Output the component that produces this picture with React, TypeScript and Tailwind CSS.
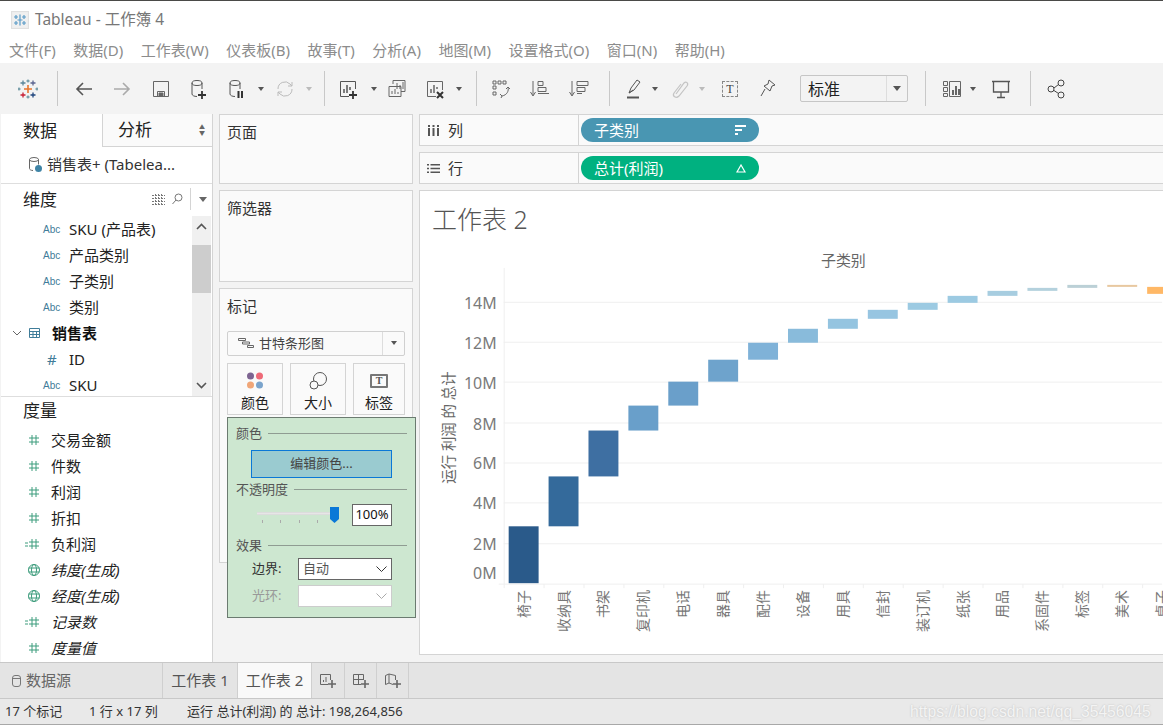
import React from 'react';

const Ic: React.FC<{ w?: number; h?: number; children: React.ReactNode; c?: string }> = ({ w = 22, h = 22, children, c = '#555' }) => (
  <svg width={w} height={h} viewBox={`0 0 ${w} ${h}`} fill="none" stroke={c} strokeWidth={1}>
    {children}
  </svg>
);

const Caret: React.FC<{ light?: boolean }> = ({ light }) => (
  <div className="w-[10px] flex justify-center">
    <div className={`w-0 h-0 border-x-[3px] border-x-transparent border-t-[4px] ${light ? 'border-t-[#bbb]' : 'border-t-[#555]'}`} />
  </div>
);

const Sep = () => <div className="w-px h-[35px] bg-[#c8c8c8]" />;

const Tool: React.FC<{ children: React.ReactNode }> = ({ children }) => (
  <div className="w-[38px] flex justify-center items-center">{children}</div>
);

const Cyl = ({ c = '#555' }: { c?: string }) => (
  <>
    <ellipse cx="9" cy="5" rx="5" ry="2.5" stroke={c} />
    <path d="M4 5v11c0 1.4 2.2 2.5 5 2.5M14 5v6" stroke={c} />
  </>
);

const TableauLogo = () => (
  <svg width="20" height="20" viewBox="0 0 20 20" strokeWidth={1.3}>
    <path d="M10 6v8M6 10h8" stroke="#e8762d" strokeWidth={1.6} />
    <path d="M5 1.5v5M2.5 4h5" stroke="#5b879b" />
    <path d="M15 1.5v5M12.500 4h5" stroke="#5b6591" />
    <path d="M5 13.500v5M2.500 16h5" stroke="#c72035" />
    <path d="M15 13.500v5M12.500 16h5" stroke="#1f457e" />
    <path d="M10 .5v3M8.500 2h3M10 16.500v3M8.500 18h3M1 8.500v3M-.5 10h3M19 8.500v3M17.500 10h3" stroke="#7099a6" />
  </svg>
);

const Toolbar = () => (
  <div className="h-[51px] bg-[#f3f3f3] flex items-center pl-[9px] shrink-0">
    <Tool><TableauLogo /></Tool>
    <div className="ml-[10px] mr-[7px]"><Sep /></div>
    <Tool><Ic><path d="M19 11H4M10 5l-6 6 6 6" strokeWidth={1.6} /></Ic></Tool>
    <Tool><Ic c="#aaa"><path d="M3 11h15M12 5l6 6-6 6" strokeWidth={1.6} /></Ic></Tool>
    <div className="ml-[1px]"><Tool><Ic c="#666"><path d="M3.500 3.500h15v15h-15zM7.500 18.500v-5h7v5" /><path d="M9 15h4v3H9z" fill="#666" /></Ic></Tool></div>
    <Tool><Ic><Cyl /><path d="M14 13v8M10 17h8" stroke="#333" strokeWidth={1.8} /></Ic></Tool>
    <Tool><Ic><Cyl /><path d="M12.500 13v7M16 13v7" stroke="#333" strokeWidth={2} /></Ic></Tool>
    <Caret />
    <Tool><Ic c="#bbb"><path d="M4 11a7 7 0 0 1 12-5l2 2M18 11a7 7 0 0 1-12 5l-2-2M18 4v4h-4M4 18v-4h4" /></Ic></Tool>
    <Caret light />
    <div className="ml-[10px] mr-[4px]"><Sep /></div>
    <Tool><Ic><path d="M12 18.500H3.500v-15h15V11" /><path d="M7 15v-4M10 15V7M13 12V9" strokeWidth={1.5} /><path d="M16 13v8M12 17h8" stroke="#333" strokeWidth={1.8} /></Ic></Tool>
    <div className="ml-[2px] -mr-[1px]"><Caret /></div>
    <Tool><Ic c="#666"><path d="M7 6V2.500h12v11h-4" /><path d="M3 8.500h12v10H3z" /><path d="M11 11V5M14 11V7M17 11V4" /><path d="M6 16v-3M9 16v-5M12 16v-2" /></Ic></Tool>
    <Tool><Ic c="#666"><path d="M12 18.500H3.500v-15h15V12" /><path d="M7 15v-4M10 15V7M13 11V9" strokeWidth={1.5} /><path d="M13 14l6 6M19 14l-6 6" stroke="#333" strokeWidth={2} /></Ic></Tool>
    <Caret />
    <div className="ml-[12px] mr-[5px]"><Sep /></div>
    <Tool><Ic c="#666"><path d="M3 3h3v3H3zM8 3h3v3H8zM13 3h3v3h-3zM3 8h3v3H3zM3 14h3v3H3z" /><path d="M18 9c1 4-1 8-6 9M10 16l2 2-1 2M18 9l2 2M18 9l-2 2" /></Ic></Tool>
    <div className="ml-px"><Tool><Ic c="#666"><path d="M4 3v14M1.500 14L4 18l2.500-4" /><path d="M9 3.500h5v4H9zM9 9.500h8v4H9zM9 15.500h11" /></Ic></Tool></div>
    <div className="ml-px"><Tool><Ic c="#666"><path d="M4 3v14M1.500 14L4 18l2.500-4" /><path d="M9 3.500h11v4H9zM9 9.500h8v4H9zM9 15.500h5" /></Ic></Tool></div>
    <div className="ml-[11px] mr-[4px]"><Sep /></div>
    <Tool><Ic c="#555"><path d="M7 15l2-5 6-8 3 2-6 8z" /><path d="M7 15l4-3" /><path d="M5 19.500h12" strokeWidth={2} /></Ic></Tool>
    <div className="-ml-[2px] mr-[1px]"><Caret /></div>
    <Tool><Ic c="#c4c4c4"><path d="M7 16l8-11c2-2 5 0 3 3l-8 10c-3 3-7 0-5-3l7-9" strokeWidth={1.2} /></Ic></Tool>
    <div className="-ml-[2px] mr-[1px]"><Caret light /></div>
    <div className="w-[38px] flex justify-center ml-[3px]">
      <div className="w-[16px] h-[16px] border border-dashed border-[#888] flex items-center justify-center font-['Liberation_Serif',serif] text-[12px] leading-none text-[#444]">T</div>
    </div>
    <Tool><Ic c="#555"><path d="M12 2l6 5-3 1-2 5-6-5 4-2zM8 11l-4 7" /></Ic></Tool>
    <div className="ml-[13px] w-[108px] h-[27px] border border-[#c6c6c6] rounded-[2px] flex items-center text-[16px] text-[#222]">
      <span className="flex-1 pl-[7px] leading-none">标准</span>
      <div className="w-[21px] h-full border-l border-[#ddd] flex items-center justify-center">
        <div className="w-0 h-0 border-x-[4px] border-x-transparent border-t-[5px] border-t-[#555]" />
      </div>
    </div>
    <div className="ml-[17px] mr-[7px]"><Sep /></div>
    <Tool><Ic c="#666"><path d="M2.500 3.500h4v4h-4zM2.500 9.500h4v4h-4zM2.500 15.500h4v3h-4zM8.500 3.500h11v15h-11z" /><path d="M12 17v-5M15 17V8M18 17v-6" strokeWidth={2} /></Ic></Tool>
    <div className="-ml-[3px]"><Caret /></div>
    <div className="ml-[4px]"><Tool><Ic c="#555"><path d="M2 3.500h18M3.500 4v10h15V4M11 14v5M7 19.500h8" strokeWidth={1.3} /></Ic></Tool></div>
    <div className="ml-[10px] mr-[7px]"><Sep /></div>
    <Tool><Ic c="#444"><circle cx="5" cy="11" r="3" /><circle cx="15" cy="5" r="3" /><circle cx="15" cy="17" r="3" /><path d="M8 10l4.500-3.500M8 12.500l4.500 3" /></Ic></Tool>
  </div>
);

const AbcRow: React.FC<{ t: string; hash?: boolean }> = ({ t, hash }) => (
  <div className="h-[26px] flex items-center">
    <span className={`w-[42px] ml-[42px] shrink-0 text-[#3f7c99] ${hash ? 'text-[15px] pl-[4px]' : "text-[10px] font-['Liberation_Sans',sans-serif]"} -mr-[16px]`}>{hash ? '#' : 'Abc'}</span>
    <span className="text-[15px] text-[#222] whitespace-nowrap">{t}</span>
  </div>
);

const Hash: React.FC<{ calc?: boolean }> = ({ calc }) => (
  <svg width="26" height="12" viewBox="0 0 26 12" stroke="#3d9c7c" fill="none" strokeWidth={1}>
    {calc && <path d="M2 5h3M2 8h3" />}
    <path d="M9 1v10M13 1v10M6 4h10M6 8h10" />
  </svg>
);

const Globe = () => (
  <svg width="26" height="14" viewBox="0 0 26 14" stroke="#3d9c7c" fill="none" strokeWidth={1}>
    <circle cx="11" cy="7" r="5.500" />
    <ellipse cx="11" cy="7" rx="2.500" ry="5.500" />
    <path d="M5.500 5h11M5.500 9h11" />
  </svg>
);

const MeasureRow: React.FC<{ t: string; icon: React.ReactNode; it?: boolean }> = ({ t, icon, it }) => (
  <div className="h-[26px] flex items-center">
    <div className="w-[50px] pl-[22px] shrink-0 flex items-center">{icon}</div>
    <span className={`text-[15px] text-[#222] whitespace-nowrap ${it ? 'italic' : ''}`}>{t}</span>
  </div>
);

const LeftPanel = () => (
  <div className="w-[212px] shrink-0 ml-px bg-white flex flex-col border-r border-[#d4d4d4]">
    <div className="h-[33px] flex text-[17px] text-[#222] shrink-0">
      <div className="w-[101px] bg-white flex items-center pl-[22px]">数据</div>
      <div className="flex-1 bg-[#fafafa] border-l border-b border-[#d4d4d4] flex items-center pl-[15px] relative">
        分析
        <span className="absolute right-[7px] top-[10px] text-[6px] leading-[6px] text-[#666] flex flex-col">
          <span>▲</span>
          <span>▼</span>
        </span>
      </div>
    </div>
    <div className="h-[37px] flex items-center pl-[26px] pb-[2px] border-b border-[#dedede] shrink-0">
      <svg width="17" height="17" viewBox="0 0 17 17" fill="none" stroke="#666">
        <ellipse cx="7" cy="3.500" rx="4.500" ry="2" />
        <path d="M2.500 3.500v9c0 1 1.500 2 3.500 2M11.500 3.500v5" />
        <circle cx="11.500" cy="12.500" r="3.500" fill="#3f84a6" stroke="none" />
      </svg>
      <span className="ml-[3px] text-[15px] text-[#333] whitespace-nowrap">销售表+ (Tabelea...</span>
    </div>
    <div className="h-[32px] flex items-center pl-[22px] shrink-0 relative">
      <span className="text-[17px] text-[#222]">维度</span>
      <svg className="absolute left-[151px] top-[10px]" width="13" height="11" viewBox="0 0 13 11" stroke="#777" fill="none">
        <path d="M0 1.500h13M0 4.500h13M0 7.500h13M0 10.500h13M3.500 0v11M6.500 0v11M9.500 0v11" strokeDasharray="2 1" />
      </svg>
      <svg className="absolute left-[171px] top-[9px]" width="11" height="12" viewBox="0 0 11 12" stroke="#777" fill="none">
        <circle cx="6.500" cy="4.500" r="3.500" />
        <path d="M4 7l-3.500 4" />
      </svg>
      <div className="absolute left-[189px] top-[4px] h-[22px] w-px bg-[#d4d4d4]" />
      <div className="absolute left-[198px] top-[13px] w-0 h-0 border-x-[4px] border-x-transparent border-t-[5px] border-t-[#666]" />
    </div>
    <div className="h-[180px] flex shrink-0 overflow-hidden">
      <div className="flex-1 overflow-hidden">
        <AbcRow t="SKU (产品表)" />
        <AbcRow t="产品类别" />
        <AbcRow t="子类别" />
        <AbcRow t="类别" />
        <div className="h-[26px] flex items-center">
          <svg className="ml-[11px]" width="10" height="6" viewBox="0 0 10 6" stroke="#666" fill="none"><path d="M1 1l4 4 4-4" /></svg>
          <svg className="ml-[7px]" width="11" height="10" viewBox="0 0 11 10" stroke="#3f7c99" fill="none"><path d="M.5.5h10v9H.5zM.5 3.500h10M.5 6.500h10M4 3.500v6M7.500 3.500v6" /></svg>
          <span className="ml-[12px] text-[15px] font-bold text-[#111]">销售表</span>
        </div>
        <AbcRow t="ID" hash />
        <AbcRow t="SKU" />
      </div>
      <div className="w-[19px] mr-px bg-[#f0f0f0] flex flex-col shrink-0 relative">
        <svg className="absolute left-[4px] top-[7px]" width="11" height="7" viewBox="0 0 11 7" stroke="#555" strokeWidth={1.6} fill="none"><path d="M1 6l4.500-4.500L10 6" /></svg>
        <div className="mt-[29px] h-[48px] bg-[#cdcdcd]" />
        <svg className="absolute left-[4px] bottom-[7px]" width="11" height="7" viewBox="0 0 11 7" stroke="#555" strokeWidth={1.6} fill="none"><path d="M1 1l4.500 4.500L10 1" /></svg>
      </div>
    </div>
    <div className="h-[31px] border-t border-[#dedede] flex items-center pl-[22px] pb-[3px] text-[17px] text-[#222] shrink-0">度量</div>
    <div className="flex-1 overflow-hidden">
      <MeasureRow t="交易金额" icon={<Hash />} />
      <MeasureRow t="件数" icon={<Hash />} />
      <MeasureRow t="利润" icon={<Hash />} />
      <MeasureRow t="折扣" icon={<Hash />} />
      <MeasureRow t="负利润" icon={<Hash calc />} />
      <MeasureRow t="纬度(生成)" icon={<Globe />} it />
      <MeasureRow t="经度(生成)" icon={<Globe />} it />
      <MeasureRow t="记录数" icon={<Hash calc />} it />
      <MeasureRow t="度量值" icon={<Hash />} it />
    </div>
  </div>
);

const Card: React.FC<{ t: string; h: string; children?: React.ReactNode }> = ({ t, h, children }) => (
  <div className={`${h} bg-[#fafafa] border border-[#d4d4d4] pl-[7px] pt-[6px] text-[15px] text-[#333]`}>
    <div>{t}</div>
    {children}
  </div>
);

const MarkBtn: React.FC<{ t: string; w: string; children: React.ReactNode }> = ({ t, w, children }) => (
  <div className={`h-[52px] ${w} border border-[#d4d4d4] flex flex-col items-center`}>
    <div className="h-[30px] flex items-center justify-center pt-[4px]">{children}</div>
    <span className="text-[14px] leading-[18px] text-[#222]">{t}</span>
  </div>
);

const GroupHead: React.FC<{ t: string }> = ({ t }) => (
  <div className="flex items-center gap-[6px] h-[14px]">
    <span className="text-[13px] text-[#555] leading-none whitespace-nowrap">{t}</span>
    <div className="flex-1 h-px bg-[#8f9c92]" />
  </div>
);

const Chevron: React.FC<{ c: string }> = ({ c }) => (
  <svg width="11" height="6" viewBox="0 0 11 6" stroke={c} fill="none"><path d="M.5.5l5 5 5-5" /></svg>
);

const MiddleCol = () => (
  <div className="w-[194px] shrink-0 ml-[6px] flex flex-col gap-[6px] relative">
    <Card t="页面" h="h-[70px]" />
    <Card t="筛选器" h="h-[92px]" />
    <div className="h-[275px] bg-[#fafafa] border border-[#d4d4d4] px-[7px] pt-[6px]">
      <div className="text-[15px] text-[#333]">标记</div>
      <div className="mt-[13px] h-[25px] w-[178px] border border-[#d0d0d0] rounded-[2px] flex items-center">
        <svg className="ml-[10px]" width="16" height="10" viewBox="0 0 16 10" stroke="#666" fill="none"><path d="M.5.5h7v2h-7zM4.500 4h7v2h-7zM9.500 7.500h6v2h-6z" /></svg>
        <span className="ml-[5px] flex-1 text-[13px] text-[#444] pt-px">甘特条形图</span>
        <div className="w-[22px] h-full border-l border-[#ddd] flex items-center justify-center">
          <div className="w-0 h-0 border-x-[3px] border-x-transparent border-t-[4px] border-t-[#555]" />
        </div>
      </div>
      <div className="mt-[7px] flex gap-[7px]">
        <MarkBtn t="颜色" w="w-[56px]">
          <svg width="18" height="18" viewBox="0 0 18 18">
            <circle cx="4.500" cy="4" r="3.500" fill="#7d6491" />
            <circle cx="13.500" cy="4" r="3.500" fill="#ee6a78" />
            <circle cx="4.500" cy="13" r="3.500" fill="#f0a678" />
            <circle cx="13.500" cy="13" r="3.500" fill="#7ba4cc" />
          </svg>
        </MarkBtn>
        <MarkBtn t="大小" w="w-[56px]">
          <svg width="18" height="18" viewBox="0 0 18 18" stroke="#555" fill="none">
            <circle cx="11" cy="7" r="6.500" />
            <circle cx="5" cy="13" r="4" fill="#fafafa" />
          </svg>
        </MarkBtn>
        <MarkBtn t="标签" w="w-[52px]">
          <div className="w-[18px] h-[14px] border-2 border-[#777] rounded-[1px] flex items-center justify-center font-['Liberation_Serif',serif] font-bold text-[10px] text-[#555] leading-none">T</div>
        </MarkBtn>
      </div>
    </div>
    {/* color popover */}
    <div className="absolute left-[8px] top-[303px] w-[189px] h-[201px] bg-[#cde7d0] border border-[#6b7b70] px-[8px] pt-[8px]">
      <GroupHead t="颜色" />
      <div className="ml-[15px] mt-[10px] w-[141px] h-[28px] bg-[#9acbd0] border border-[#0a78d7] flex items-center justify-center text-[13px] text-[#444]">编辑颜色...</div>
      <div className="mt-[4px]"><GroupHead t="不透明度" /></div>
      <div className="mt-[8px] flex items-center h-[22px]">
        <div className="ml-[21px] w-[78px] h-[17px] relative">
          <div className="absolute left-0 top-[5px] w-[76px] h-[3px] bg-[#e6e6e6] border-y border-[#dcdcdc]" />
          <div className="absolute left-[5px] top-[13px] w-px h-[3px] bg-[#aaa]" />
          <div className="absolute left-[23px] top-[13px] w-px h-[3px] bg-[#aaa]" />
          <div className="absolute left-[42px] top-[13px] w-px h-[3px] bg-[#aaa]" />
          <div className="absolute left-[60px] top-[13px] w-px h-[3px] bg-[#aaa]" />
          <svg className="absolute left-[73px] top-0" width="9" height="16" viewBox="0 0 9 16"><path d="M0 0h9v12l-4.500 4L0 12z" fill="#0a78d7" /></svg>
        </div>
        <div className="ml-[17px] w-[40px] h-[22px] bg-white border border-[#666] flex items-center justify-center text-[13px] text-[#111]">100%</div>
      </div>
      <div className="mt-[12px]"><GroupHead t="效果" /></div>
      <div className="mt-[6px] flex items-center h-[22px]">
        <span className="ml-[16px] w-[46px] text-[13px] text-[#333]">边界:</span>
        <div className="w-[94px] h-[22px] bg-white border border-[#666] flex items-center justify-between pl-[4px] pr-[4px] text-[13px] text-[#555]">
          自动
          <Chevron c="#333" />
        </div>
      </div>
      <div className="mt-[5px] flex items-center h-[22px]">
        <span className="ml-[16px] w-[46px] text-[13px] text-[#999]">光环:</span>
        <div className="w-[94px] h-[22px] bg-white border border-[#ccc] flex items-center justify-end pr-[4px]">
          <Chevron c="#aaa" />
        </div>
      </div>
    </div>
  </div>
);

const Shelf: React.FC<{ t: string; icon: React.ReactNode; pill: string; bg: string; mark: React.ReactNode }> = ({ t, icon, pill, bg, mark }) => (
  <div className="h-[32px] bg-[#fafafa] border-y border-[#d4d4d4] flex items-center">
    <div className="w-[160px] h-full border-l border-r border-[#d4d4d4] flex items-center pl-[7px] text-[15px] text-[#333] gap-[8px] shrink-0">
      {icon}
      {t}
    </div>
    <div className={`ml-[2px] w-[178px] h-[24px] rounded-full ${bg} flex items-center justify-between pl-[13px] pr-[13px] text-[15px] text-white`}>
      {pill}
      {mark}
    </div>
  </div>
);

const bars: [number, number, string][] = [
  [527, 584, '#2a5a8a'], [477, 527, '#346a9b'], [431, 477, '#3e6fa2'], [406, 431, '#699fca'],
  [382, 406, '#6a9fca'], [360, 382, '#6ea3cc'], [343, 360, '#7fb2d8'], [329, 343, '#89bbdb'],
  [319, 329, '#94c4e0'], [310, 319, '#97c5e1'], [303, 310, '#9ccae2'], [296, 303, '#9ccae2'],
  [291, 296, '#a7cde0'], [288, 291, '#b4d1dd'], [285, 288, '#bbd0d6'], [285, 287, '#e8c8a0'],
  [287, 294, '#ffb866'],
];
const cats = ['椅子', '收纳具', '书架', '复印机', '电话', '器具', '配件', '设备', '用具', '信封', '装订机', '纸张', '用品', '系固件', '标签', '美术', '桌子'];
const ticks: [string, number, number][] = [
  ['14M', 303, 302], ['12M', 343, 342], ['10M', 383, 382], ['8M', 424, 423],
  ['6M', 464, 463], ['4M', 504, 503], ['2M', 545, 544], ['0M', 574, 0],
];

const Chart = () => (
  <svg className="block" width="743" height="420" viewBox="420 235 743 420">
    <path d="M503.500 268V589" stroke="#efefef" />
    <path d="M498 585H1163" stroke="#efefef" />
    {ticks.map(([l, y, g]) => (
      <g key={l}>
        {g > 0 && <path d={`M503 ${g + 0.5}H1163`} stroke="#efefef" />}
        <text x="496" y={y + 6} textAnchor="end" fontSize="16" fill="#7a7a7a">{l}</text>
      </g>
    ))}
    <text x="866" y="266" textAnchor="end" fontSize="15" fill="#666">子类别</text>
    <text transform="translate(453 428) rotate(-90)" textAnchor="middle" fontSize="14.5" fill="#666">运行 利润 的 总计</text>
    {bars.map(([t, b, c], i) => (
      <rect key={i} x={508 + i * 40} y={t} width={30} height={b - t} fill={c} />
    ))}
    {cats.map((c, i) => (
      <g key={c}>
        <path d={`M${543.5 + i * 40} 585v4`} stroke="#efefef" />
        <text transform={`translate(${528 + i * 40} 591) rotate(-90)`} textAnchor="end" fontSize="14" fill="#777">{c}</text>
      </g>
    ))}
  </svg>
);

const RightCol = () => (
  <div className="flex-1 min-w-0 ml-[6px] flex flex-col gap-[6px] overflow-hidden">
    <Shelf
      t="列"
      icon={<svg width="13" height="11" viewBox="0 0 13 11" fill="#555"><path d="M1 0h2v2H1zM1 3h2v8H1zM5.500 0h2v2h-2zM5.500 3h2v8h-2zM10 0h2v2h-2zM10 3h2v8h-2z" /></svg>}
      pill="子类别"
      bg="bg-[#4996b2]"
      mark={<svg width="11" height="10" viewBox="0 0 11 10" fill="#fff"><path d="M0 0h11v2H0zM0 4h7v2H0zM0 8h3v2H0z" /></svg>}
    />
    <Shelf
      t="行"
      icon={<svg width="13" height="11" viewBox="0 0 13 11" fill="#555"><path d="M0 1h2v1.500H0zM3.500 1H13v1.500H3.500zM0 4.800h2v1.500H0zM3.500 4.800H13v1.500H3.500zM0 8.500h2V10H0zM3.500 8.500H13V10H3.500z" /></svg>}
      pill="总计(利润)"
      bg="bg-[#00b180]"
      mark={<svg width="10" height="9" viewBox="0 0 10 9" stroke="#fff" fill="none" strokeWidth={1.2}><path d="M5 1L1 8h8z" /></svg>}
    />
    <div className="h-[465px] bg-white border-t border-l border-b border-[#d4d4d4] flex flex-col">
      <div className="h-[44px] shrink-0 pl-[12px] pt-[11px] text-[25px] leading-[34px] font-light text-[#555]">工作表 2</div>
      <Chart />
    </div>
  </div>
);

const SheetTab: React.FC<{ w: string; on?: boolean; children: React.ReactNode }> = ({ w, on, children }) => (
  <div className={`${w} h-full shrink-0 border-r border-[#cfcfcf] flex items-center justify-center text-[15px] text-[#555] ${on ? 'bg-[#f9f9f9]' : ''}`}>{children}</div>
);

const Tabs = () => (
  <div className="h-[37px] shrink-0 bg-[#e4e4e4] border-y border-[#c8c8c8] flex">
    <div className="w-[163px] h-full shrink-0 border-r border-[#cfcfcf] flex items-center pl-[12px] gap-[5px] text-[15px] text-[#666]">
      <svg width="9" height="12" viewBox="0 0 9 12" stroke="#777" fill="none"><rect x=".5" y=".5" width="8" height="11" rx="2.500" /><path d="M.5 3.500h8" /></svg>
      数据源
    </div>
    <SheetTab w="w-[75px]">工作表 1</SheetTab>
    <SheetTab w="w-[74px]" on>工作表 2</SheetTab>
    <SheetTab w="w-[33px]">
      <svg width="18" height="16" viewBox="0 0 18 16" stroke="#666" fill="none"><path d="M9 11.500H1.500v-10h10V7M4.500 9V7M7 9V4" /><path d="M13 7v8M9 11h8" strokeWidth={1.6} /></svg>
    </SheetTab>
    <SheetTab w="w-[32px]">
      <svg width="18" height="16" viewBox="0 0 18 16" stroke="#666" fill="none"><path d="M9 11.500H1.500v-10h10V7M1.500 6.500h10M6.500 1.500v10" /><path d="M13 7v8M9 11h8" strokeWidth={1.6} /></svg>
    </SheetTab>
    <SheetTab w="w-[32px]">
      <svg width="18" height="16" viewBox="0 0 18 16" stroke="#666" fill="none"><path d="M9 11.500L5 10l-3.500 1.500v-9L5 1l6.500 1.500V7M5 1v9" /><path d="M13 7v8M9 11h8" strokeWidth={1.6} /></svg>
    </SheetTab>
  </div>
);

const Status = () => (
  <div className="h-[26px] shrink-0 bg-[#e9e9e9] border-b border-[#a8a8a8] flex items-center text-[13px] text-[#333] relative">
    <span className="ml-[5px] w-[84px]">17 个标记</span>
    <span className="w-[98px]">1 行 x 17 列</span>
    <span>运行 总计(利润) 的 总计: 198,264,856</span>
    <span className="absolute left-[910px] top-[1px] text-[15.700px] text-[#f4f4f4] [text-shadow:0_0_2px_#bbb] font-['Liberation_Sans',sans-serif] whitespace-nowrap">https://blog.csdn.net/qq_35456045</span>
  </div>
);

export default function App() {
  return (
    <div className="w-[1163px] h-[725px] overflow-hidden flex flex-col bg-white font-['Noto_Sans','Noto_Sans_CJK_SC',sans-serif]">
      <div className="h-px shrink-0 bg-[#4a4a48]" />
      <div className="h-[36px] shrink-0 flex items-center pl-[11px] pt-[2px] gap-[6px] text-[15.500px] text-[#777]">
        <svg width="18" height="18" viewBox="0 0 18 18" stroke="#5b9cc7" fill="none" strokeWidth={1.2}>
          <rect x=".5" y=".5" width="17" height="17" fill="#f0f0f0" stroke="#e0e0e0" />
          <path d="M9 3.500v11M6.500 9h5M5 4v4M3 6h4M13 4v4M11 6h4M5 10v4M3 12h4M13 10v4M11 12h4" />
        </svg>
        <span>Tableau - 工作簿 4</span>
      </div>
      <div className="h-[26px] shrink-0 flex items-center pl-[9px] pt-[1px] gap-[17.500px] text-[15px] text-[#8c8c8c] whitespace-nowrap">
        <span>文件(F)</span>
        <span>数据(D)</span>
        <span>工作表(W)</span>
        <span>仪表板(B)</span>
        <span>故事(T)</span>
        <span>分析(A)</span>
        <span>地图(M)</span>
        <span>设置格式(O)</span>
        <span>窗口(N)</span>
        <span>帮助(H)</span>
      </div>
      <Toolbar />
      <div className="flex-1 min-h-0 bg-[#f3f3f3] flex overflow-hidden">
        <LeftPanel />
        <MiddleCol />
        <RightCol />
      </div>
      <Tabs />
      <Status />
    </div>
  );
}
